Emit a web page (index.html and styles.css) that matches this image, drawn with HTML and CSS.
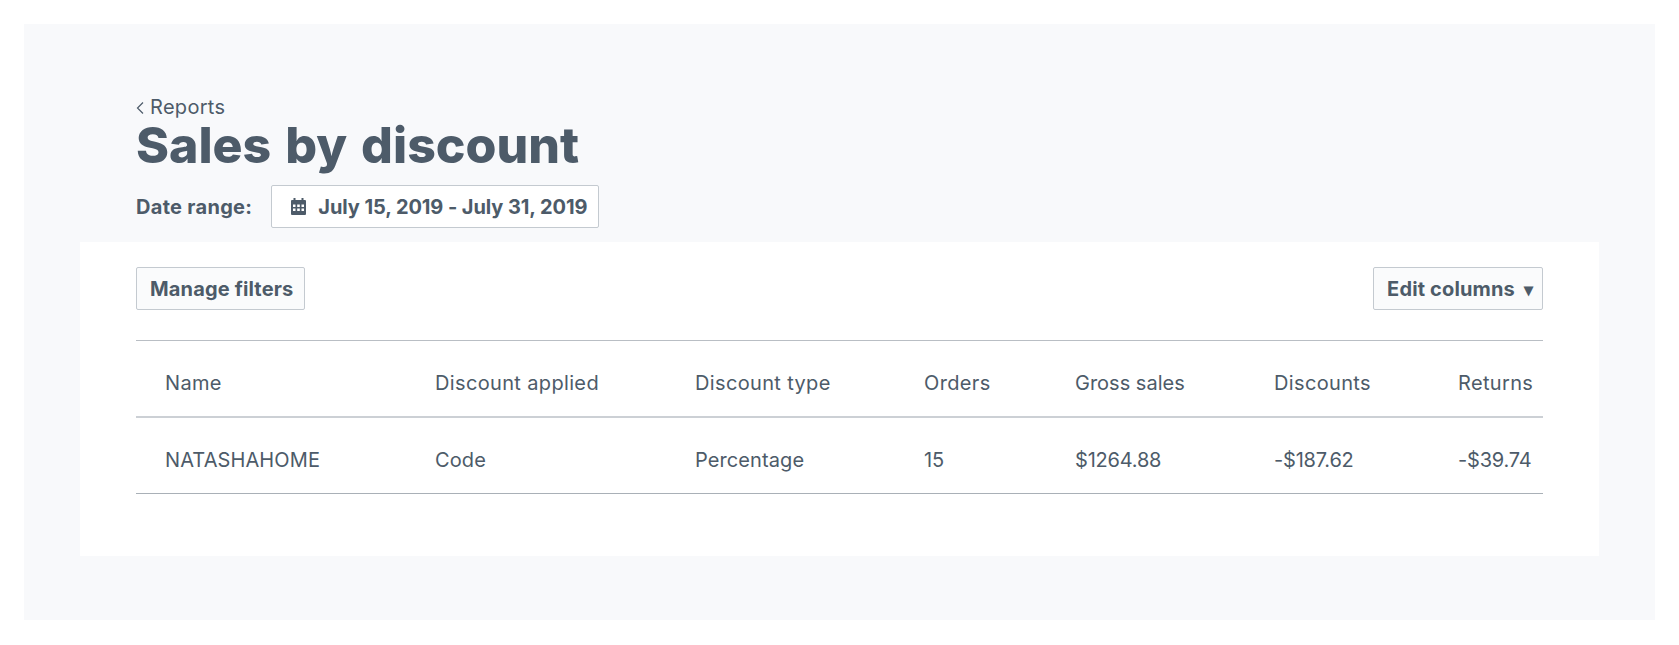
FILE: index.html
```html
<!DOCTYPE html>
<html lang="en">
<head>
    <meta charset="UTF-8">
    <meta name="viewport" content="width=device-width, initial-scale=1.0">
    <title>Sales by discount</title>
    <link rel="stylesheet" href="styles.css">
</head>
<body>
    <div class="panel">
        <div class="page-head">
            <a class="back-link" href="#">
                <svg class="back-icon" width="8" height="14" viewBox="0 0 8 14" aria-hidden="true"><path d="M7 1.5 1.5 7 7 12.5" fill="none" stroke="currentColor" stroke-width="1.2"/></svg>
                Reports
            </a>
            <h1>Sales by discount</h1>
            <div class="date-row">
                <span class="date-label">Date range:</span>
                <button class="btn btn-date">
                    <svg width="17" height="17" viewBox="0 0 17 17" aria-hidden="true"><path fill="currentColor" fill-rule="evenodd" d="M3.5 0h2v2h6V0h2v2H15a1 1 0 0 1 1 1v13a1 1 0 0 1-1 1H2a1 1 0 0 1-1-1V3a1 1 0 0 1 1-1h1.500zM3 6.500V9h2.500V6.500zm4.200 0V9h2.600V6.500zm4.300 0V9H14V6.500zM3 10.500V13h2.500v-2.500zm4.200 0V13h2.600v-2.500zm4.300 0V13H14v-2.500z"/></svg>
                    July 15, 2019 - July 31, 2019
                </button>
            </div>
        </div>

        <div class="card">
            <div class="toolbar">
                <button class="btn btn-filters">Manage filters</button>
                <button class="btn btn-columns">Edit columns <span class="caret">&#9662;</span></button>
            </div>

            <table>
                <thead>
                    <tr>
                        <th class="col-name">Name</th>
                        <th class="col-applied">Discount applied</th>
                        <th class="col-type">Discount type</th>
                        <th class="col-orders">Orders</th>
                        <th class="col-gross">Gross sales</th>
                        <th class="col-discounts">Discounts</th>
                        <th class="col-returns">Returns</th>
                    </tr>
                </thead>
                <tbody>
                    <tr>
                        <td>NATASHAHOME</td>
                        <td>Code</td>
                        <td>Percentage</td>
                        <td class="num">15</td>
                        <td class="num">$1264.88</td>
                        <td class="num">-$187.62</td>
                        <td class="num">-$39.74</td>
                    </tr>
                </tbody>
            </table>
        </div>
    </div>
</body>
</html>
```

FILE: styles.css
```css
body {
    font-family: Inter, "Noto Sans", sans-serif;
    margin: 0;
    padding: 24px;
    background-color: #fff;
    color: #4d5b69;
}

.panel {
    background-color: #f8f9fb;
    padding: 71px 56px 64px;
}

.page-head {
    padding-left: 56px;
    padding-bottom: 14px;
}

.back-link {
    display: flex;
    align-items: center;
    gap: 6px;
    height: 24px;
    font-size: 20px;
    letter-spacing: 0.3px;
    color: #4d5b69;
    text-decoration: none;
}

.back-icon {
    margin-top: 1px;
}

h1 {
    margin: 0;
    font-size: 50px;
    line-height: 52px;
    font-weight: 800;
    word-spacing: 3px;
    color: #4d5b69;
}

.date-row {
    display: flex;
    align-items: center;
    gap: 19px;
    margin-top: 14px;
}

.date-label {
    font-size: 20px;
    letter-spacing: 0.3px;
    font-weight: 700;
}

.btn {
    font-family: inherit;
    font-size: 20px;
    font-weight: 700;
    letter-spacing: 0.15px;
    color: #4d5b69;
    height: 43px;
    padding: 0 13px;
    background-color: #fafbfc;
    border: 1px solid #c4cad0;
    border-radius: 2px;
}

.btn-filters {
    padding-right: 11px;
}

.btn-columns {
    padding-right: 9px;
}

.btn-date {
    display: flex;
    align-items: center;
    gap: 11px;
    padding: 0 11px 0 18px;
    letter-spacing: -0.08px;
    background-color: #fff;
}

.card {
    background-color: #fff;
    padding: 25px 56px 62px;
}

.toolbar {
    display: flex;
    justify-content: space-between;
    margin-bottom: 30px;
}

.caret {
    font-size: 18px;
    margin-left: 4px;
}

table {
    border-collapse: collapse;
    table-layout: fixed;
    width: 100%;
    border-top: 1px solid #b9bec4;
}

th, td {
    box-sizing: border-box;
    padding: 10px 0 0 29px;
    font-size: 20px;
    font-weight: 400;
    text-align: left;
    white-space: nowrap;
}

th {
    height: 76px;
    letter-spacing: 0.35px;
    border-bottom: 2px solid #ccd0d5;
}

td {
    height: 77px;
    letter-spacing: 0.1px;
    border-bottom: 1px solid #a9b0b7;
}

td.num {
    letter-spacing: -0.2px;
}

.col-name { width: 270px; }
.col-applied { width: 260px; }
.col-type { width: 229px; }
.col-orders { width: 151px; }
.col-gross { width: 199px; letter-spacing: 0; }
.col-discounts { width: 184px; }
.col-returns { width: 114px; }
```
